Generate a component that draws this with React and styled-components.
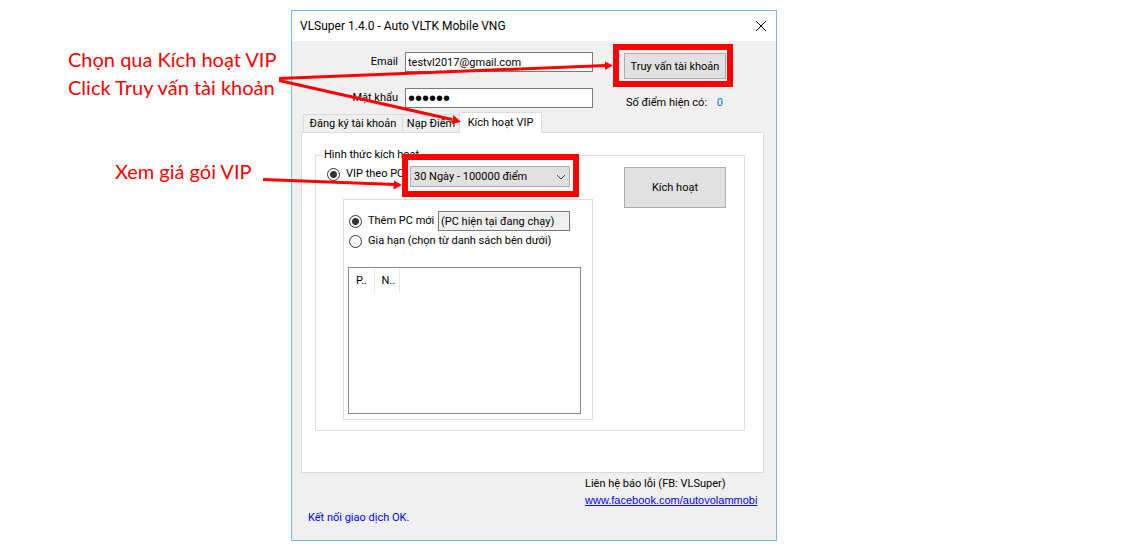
import React from "react";
import styled, { createGlobalStyle, css } from "styled-components";

const colors = {
  face: "#f0f0f0",
  line: "#dcdcdc",
  frame: "#78b7ee",
  field: "#7a7a7a",
  red: "#ff0000",
  link: "#0000ff",
};

const Global = createGlobalStyle`
  *, *::before, *::after { box-sizing: border-box; }
  body {
    margin: 0;
    background: #fff;
    color: #000;
    font: 11px/16px Roboto, "Liberation Sans", Arial, sans-serif;
  }
  button, input, select { font: inherit; color: inherit; }
`;

const Page = styled.main`
  position: relative;
  display: grid;
  grid-template-columns: 291px minmax(0, 486px) 1fr;
  padding: 10px 0 8px;
`;

const Notes = styled.aside`
  display: flex;
  flex-direction: column;
  gap: 56px;
  padding: 35px 0 0 68px;
  color: ${colors.red};
  font: 20px/28px Lato, Carlito, sans-serif;
  white-space: nowrap;
`;

const Note = styled.p`
  margin: 0;
  padding-left: ${(p) => (p.$indent ? "47px" : "0")};
`;

const Arrows = styled.svg`
  position: absolute;
  top: 0;
  left: 0;
  pointer-events: none;
`;

const Dialog = styled.section`
  border: 1px solid ${colors.frame};
  background: ${colors.face};
  white-space: nowrap;
`;

const TitleBar = styled.header`
  display: flex;
  align-items: center;
  justify-content: space-between;
  height: 30px;
  padding: 0 7px 0 8px;
  background: #fff;
`;

const Title = styled.h1`
  margin: 0;
  font: 12px/16px Roboto, "Segoe UI", sans-serif;
`;

const CloseButton = styled.button`
  display: flex;
  padding: 2px;
  border: 0;
  background: none;
`;

const Account = styled.form`
  display: grid;
  grid-template-columns: 106px 188px 102px;
  column-gap: 7px;
  padding-top: 11px;
  height: 71px;
`;

const Stack = styled.div`
  display: flex;
  flex-direction: column;
  gap: 16px;
`;

const Label = styled.label`
  height: 20px;
  line-height: 20px;
  text-align: right;
`;

const field = css`
  height: 20px;
  width: 100%;
  padding: 0 2px;
  border: 1px solid ${colors.field};
  border-radius: 0;
  outline: 0;
`;

const TextField = styled.input`
  ${field}
  background: ${(p) => (p.readOnly ? colors.face : "#fff")};
  &[type="password"] {
    font: 20px/18px "Liberation Sans", sans-serif;
  }
`;

const Query = styled.div`
  display: flex;
  flex-direction: column;
  gap: 16px;
  padding-top: 1px;
  margin-left: 24px;
  width: 102px;
`;

const PushButton = styled.button`
  width: 102px;
  height: ${(p) => (p.$tall ? "41px" : "26px")};
  padding: 1px 0 0;
  border: 1px solid #adadad;
  background: #e1e1e1;
`;

const Highlight = styled.div`
  position: relative;
  &::after {
    content: "";
    position: absolute;
    inset: ${(p) => p.$inset};
    border: 6px solid ${colors.red};
    pointer-events: none;
  }
`;

const Points = styled.p`
  display: flex;
  justify-content: space-between;
  margin: 0;
  padding: 0 3px 0 2px;
`;

const PointCount = styled.output`
  color: #0078d7;
`;

const Tabs = styled.nav`
  display: flex;
  align-items: flex-end;
  height: 20px;
  padding-left: 11px;
`;

const Tab = styled.button`
  width: ${(p) => p.$width};
  height: 18px;
  padding: 1px 0 0;
  border: 1px solid ${colors.line};
  border-width: 1px 0 0 1px;
  background: ${colors.face};
  &[aria-selected="true"] {
    position: relative;
    height: 21px;
    margin-bottom: -1px;
    padding: 0;
    border-width: 1px 1px 0;
    background: #fff;
  }
`;

const TabPanel = styled.div`
  height: 341px;
  margin: 0 12px 0 9px;
  padding: 14px 18px 0 13px;
  border: 1px solid ${colors.line};
  background: #fff;
`;

const Group = styled.fieldset`
  display: flex;
  justify-content: space-between;
  height: 284px;
  margin: 0;
  padding: 3px 18px 0 11px;
  border: 1px solid ${colors.line};
`;

const Legend = styled.legend`
  margin-left: -4px;
  padding: 0 1px;
`;

const Choice = styled.label`
  display: flex;
  align-items: center;
  gap: 6px;
`;

const Radio = styled.input`
  appearance: none;
  flex: none;
  width: 13px;
  height: 13px;
  margin: 0;
  border: 1px solid #333;
  border-radius: 50%;
  background: #fff;
  &:checked {
    background: radial-gradient(circle, #333 3px, #fff 4px);
  }
`;

const PlanRow = styled.div`
  display: grid;
  grid-template-columns: 83px 160px;
  align-items: start;
`;

const SelectBox = styled.div`
  display: grid;
  align-items: center;
  & > * { grid-area: 1 / 1; }
  & > svg { justify-self: end; margin-right: 4px; pointer-events: none; }
`;

const Select = styled.select`
  appearance: none;
  width: 160px;
  height: 21px;
  padding: 0 3px;
  border: 1px solid #adadad;
  border-radius: 0;
  background: #e1e1e1;
`;

const PcBox = styled.div`
  width: 250px;
  height: 221px;
  margin: 12px 0 0 16px;
  padding: 11px 11px 0 4px;
  border: 1px solid ${colors.line};
`;

const PcRow = styled.div`
  display: grid;
  grid-template-columns: 89px 132px;
  align-items: center;
  height: 20px;
  padding-left: 1px;
`;

const PcList = styled.div`
  height: 147px;
  margin-top: 16px;
  padding-top: 1px;
  border: 1px solid #828790;
`;

const Table = styled.table`
  border-collapse: collapse;
  th {
    width: 25px;
    height: 24px;
    padding: 0 0 0 7px;
    border-right: 1px solid #e5e5e5;
    font-weight: 400;
    text-align: left;
  }
`;

const Action = styled.div`
  padding-top: 1px;
`;

const Footer = styled.footer`
  display: grid;
  grid-template-columns: 277px 1fr;
  padding: 2px 0 14px 16px;
`;

const FooterText = styled.p`
  margin: 0;
  line-height: 17px;
`;

const Status = styled(FooterText)`
  color: ${colors.link};
`;

const Link = styled.a`
  color: ${colors.link};
  font: 11px/17px "Liberation Sans", Arial, sans-serif;
`;

export default function App() {
  return (
    <>
      <Global />
      <Page>
        <Notes>
          <Note>
            Chọn qua Kích hoạt VIP
            <br />
            Click Truy vấn tài khoản
          </Note>
          <Note $indent>Xem giá gói VIP</Note>
        </Notes>

        <Dialog>
          <TitleBar>
            <Title>VLSuper 1.4.0 - Auto VLTK Mobile VNG</Title>
            <CloseButton aria-label="Đóng">
              <svg width="12" height="12" viewBox="0 0 12 12" stroke="#000" fill="none">
                <path d="M1 1l10 10M11 1L1 11" />
              </svg>
            </CloseButton>
          </TitleBar>

          <Account onSubmit={(e) => e.preventDefault()}>
            <Stack>
              <Label htmlFor="email">Email</Label>
              <Label htmlFor="password">Mật khẩu</Label>
            </Stack>
            <Stack>
              <TextField id="email" defaultValue="testvl2017@gmail.com" />
              <TextField id="password" type="password" defaultValue="abcdef" />
            </Stack>
            <Query>
              <Highlight $inset="-9px -7px -8px -11px">
                <PushButton>Truy vấn tài khoản</PushButton>
              </Highlight>
              <Points>
                Số điểm hiện có: <PointCount>0</PointCount>
              </Points>
            </Query>
          </Account>

          <Tabs role="tablist">
            <Tab role="tab" $width="99px" aria-selected="false">Đăng ký tài khoản</Tab>
            <Tab role="tab" $width="57px" aria-selected="false">Nạp Điểm</Tab>
            <Tab role="tab" $width="83px" aria-selected="true">Kích hoạt VIP</Tab>
          </Tabs>

          <TabPanel role="tabpanel">
            <Group>
              <Legend>Hình thức kích hoạt</Legend>
              <div>
                <PlanRow>
                  <Choice>
                    <Radio type="radio" name="plan" defaultChecked />
                    VIP theo PC
                  </Choice>
                  <Highlight $inset="-12px -9px -10px -8px">
                    <SelectBox>
                      <Select aria-label="Gói VIP">
                        <option>30 Ngày - 100000 điểm</option>
                      </Select>
                      <svg width="10" height="6" viewBox="0 0 10 6" stroke="#444" fill="none">
                        <path d="M1 1l4 4 4-4" />
                      </svg>
                    </SelectBox>
                  </Highlight>
                </PlanRow>
                <PcBox>
                  <PcRow>
                    <Choice>
                      <Radio type="radio" name="pc" defaultChecked />
                      Thêm PC mới
                    </Choice>
                    <TextField readOnly aria-label="PC" defaultValue="(PC hiện tại đang chạy)" />
                  </PcRow>
                  <PcRow>
                    <Choice>
                      <Radio type="radio" name="pc" />
                      Gia hạn (chọn từ danh sách bên dưới)
                    </Choice>
                  </PcRow>
                  <PcList>
                    <Table>
                      <thead>
                        <tr>
                          <th>P..</th>
                          <th>N..</th>
                        </tr>
                      </thead>
                    </Table>
                  </PcList>
                </PcBox>
              </div>
              <Action>
                <PushButton $tall>Kích hoạt</PushButton>
              </Action>
            </Group>
          </TabPanel>

          <Footer>
            <span />
            <FooterText>Liên hệ báo lỗi (FB: VLSuper)</FooterText>
            <span />
            <Link href="https://www.facebook.com/autovolammobi">www.facebook.com/autovolammobi</Link>
            <Status>Kết nối giao dịch OK.</Status>
          </Footer>
        </Dialog>

        <Arrows width="640" height="200" viewBox="0 0 640 200" fill={colors.red} aria-hidden="true">
          <g stroke={colors.red} strokeWidth="3">
            <path d="M279 78.500L606 65.500" />
            <path d="M279 80.500L452 119.500" />
            <path d="M263 179.500L395 184.500" />
          </g>
          <path d="M613 65.500L605 61.500V70Z" />
          <path d="M461 122L453.500 115L451.500 124Z" />
          <path d="M402 185L394 180.500L393.500 189.500Z" />
        </Arrows>
      </Page>
    </>
  );
}
